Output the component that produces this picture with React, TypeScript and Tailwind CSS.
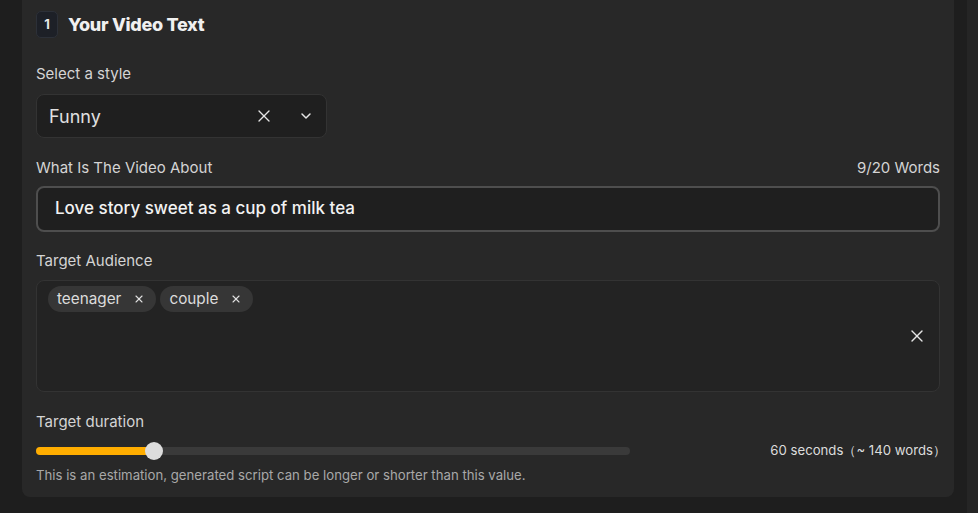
import { X, ChevronDown } from 'lucide-react'

const tags = ['teenager', 'couple']

export default function App() {
  return (
    <div
      className="flex h-[513px] w-[978px] bg-[#1e1e1e] text-[#d6d6d6]"
      style={{ fontFamily: 'Inter, "Noto Sans", sans-serif' }}
    >
      <div className="w-[22px] shrink-0" />
      <div className="flex h-[497px] w-[932px] flex-col rounded-b-lg bg-[#282828] px-[14px] pt-[11px]">
        {/* header */}
        <div className="flex items-center gap-[10px]">
          <div className="flex h-[27px] w-[22px] items-center justify-center rounded-[5px] border border-[#2c3038] bg-[#1d2027] text-[13px] font-bold text-[#e6e6e6]">
            1
          </div>
          <h2 className="text-[18px] font-extrabold tracking-[-0.3px] text-[#f0f0f0]">Your Video Text</h2>
        </div>

        {/* style select */}
        <div className="mt-[26px] text-[15px] leading-[20px] text-[#d4d4d4]">Select a style</div>
        <div className="mt-[10px] flex h-[44px] w-[291px] items-center rounded-lg border border-[#333] bg-[#1f1f1f] pl-[12px] pr-[12px]">
          <span className="flex-1 text-[18px] text-[#e0e0e0]">Funny</span>
          <X className="h-[20px] w-[20px] text-[#e6e6e6]" strokeWidth={1.6} />
          <ChevronDown className="ml-[24px] h-[16px] w-[16px] text-[#e6e6e6]" strokeWidth={2.2} />
        </div>

        {/* topic */}
        <div className="mt-[20px] flex items-center justify-between text-[15px] leading-[20px] text-[#d4d4d4]">
          <span>What Is The Video About</span>
          <span>9/20 Words</span>
        </div>
        <div className="mt-[8px] flex h-[46px] items-center rounded-lg border-2 border-[#4e4e4e] bg-[#1f1f1f] px-[17px] text-[17px] font-medium text-[#f2f2f2]">
          Love story sweet as a cup of milk tea
        </div>

        {/* audience */}
        <div className="mt-[19px] text-[15px] leading-[20px] text-[#d4d4d4]">Target Audience</div>
        <div className="mt-[9px] flex h-[112px] rounded-lg border border-[#333] bg-[#232323] pl-[11px] pr-[12px] pt-[5px]">
          <div className="flex flex-1 items-start gap-[4px]">
            {tags.map((t) => (
              <div
                key={t}
                className="flex h-[26px] items-center gap-[12px] rounded-full bg-[#363636] pl-[9px] pr-[11px] text-[15.3px] text-[#dcdcdc]"
              >
                {t}
                <X className="h-[12px] w-[12px] text-[#e0e0e0]" strokeWidth={2.2} />
              </div>
            ))}
          </div>
          <div className="flex items-center pb-[5px]">
            <X className="h-[20px] w-[20px] text-[#e6e6e6]" strokeWidth={1.6} />
          </div>
        </div>

        {/* duration */}
        <div className="mt-[20px] text-[15px] leading-[20px] text-[#d4d4d4]">Target duration</div>
        <div className="mt-[9px] flex h-[20px] items-center justify-between">
          <div className="relative h-[8px] w-[594px] rounded-full bg-[#3a3a3a]">
            <div className="h-[8px] w-[118px] rounded-full bg-[#ffad00]" />
            <div className="absolute left-[109px] top-[-5px] h-[18px] w-[18px] rounded-full bg-[#dcdcdc]" />
          </div>
          <span className="mr-[-6px] text-[13.2px] text-[#dcdcdc]">60 seconds（~ 140 words）</span>
        </div>
        <div className="mt-[5px] text-[13.2px] text-[#a8a8a8]">
          This is an estimation, generated script can be longer or shorter than this value.
        </div>
      </div>
      <div className="w-[13px] shrink-0" />
      <div className="flex-1 bg-[#252525]" />
    </div>
  )
}
